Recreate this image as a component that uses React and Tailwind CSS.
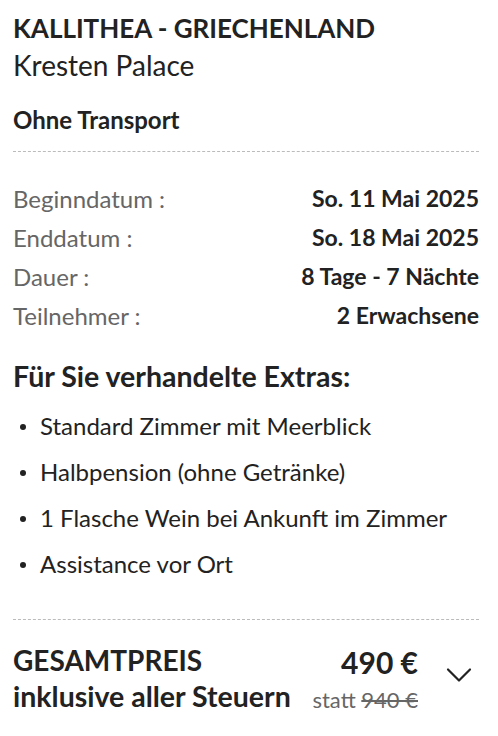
import React from 'react';

const rows = [
  { label: 'Beginndatum :', value: 'So. 11 Mai 2025' },
  { label: 'Enddatum :', value: 'So. 18 Mai 2025' },
  { label: 'Dauer :', value: '8 Tage - 7 Nächte' },
  { label: 'Teilnehmer :', value: '2 Erwachsene' },
];

const extras = [
  'Standard Zimmer mit Meerblick',
  'Halbpension (ohne Getränke)',
  '1 Flasche Wein bei Ankunft im Zimmer',
  'Assistance vor Ort',
];

const App = () => {
  return (
    <div className="min-h-screen bg-white text-[#222] font-['Lato',sans-serif] pl-[13px] pr-[19px] pt-[12px]">
      {/* Header */}
      <h1 className="text-[26px] font-bold leading-[32px]">KALLITHEA - GRIECHENLAND</h1>
      <h2 className="mt-[1px] text-[28px] font-normal leading-[40px]">Kresten Palace</h2>
      <p className="mt-[19px] text-[24px] font-bold leading-[32px]">Ohne Transport</p>

      <div className="mt-[15px] border-t border-dashed border-[#bbb]" />

      {/* Details */}
      <div className="mt-[27px] flex flex-col">
        {rows.map((row) => (
          <div key={row.label} className="flex justify-between items-center h-[39px] leading-[39px]">
            <span className="text-[24px] text-[#666]">{row.label}</span>
            <span className="text-[23px] font-bold">{row.value}</span>
          </div>
        ))}
      </div>

      {/* Extras */}
      <h3 className="mt-[23px] text-[28.5px] font-bold leading-[36px]">Für Sie verhandelte Extras:</h3>
      <ul className="mt-[9px] flex flex-col">
        {extras.map((item) => (
          <li key={item} className="flex items-center h-[46px] text-[24px]">
            <span className="mt-[1px] w-[6px] h-[6px] rounded-full bg-[#222] ml-[7px] mr-[14px] shrink-0" />
            {item}
          </li>
        ))}
      </ul>

      <div className="mt-[32px] border-t border-dashed border-[#bbb]" />

      {/* Total */}
      <div className="mt-[22px] flex items-start">
        <div className="flex-1">
          <div className="text-[28px] font-bold leading-[36px]">GESAMTPREIS</div>
          <div className="text-[28.5px] font-bold leading-[36px]">inklusive aller Steuern</div>
        </div>
        <div className="flex flex-col items-end">
          <div className="pt-[2px] text-[30px] font-bold leading-[36px]">490 €</div>
          <div className="text-[22px] leading-[40px] text-[#666]">
            statt <span className="line-through">940 €</span>
          </div>
        </div>
        <svg className="ml-[28px] mr-[7px] mt-[25px]" width="26" height="17" viewBox="0 0 26 17" fill="none">
          <path d="M2 2.5l11 11 11-11" stroke="#222" strokeWidth="2.2" strokeLinecap="round" strokeLinejoin="round" />
        </svg>
      </div>
    </div>
  );
};

export default App;
